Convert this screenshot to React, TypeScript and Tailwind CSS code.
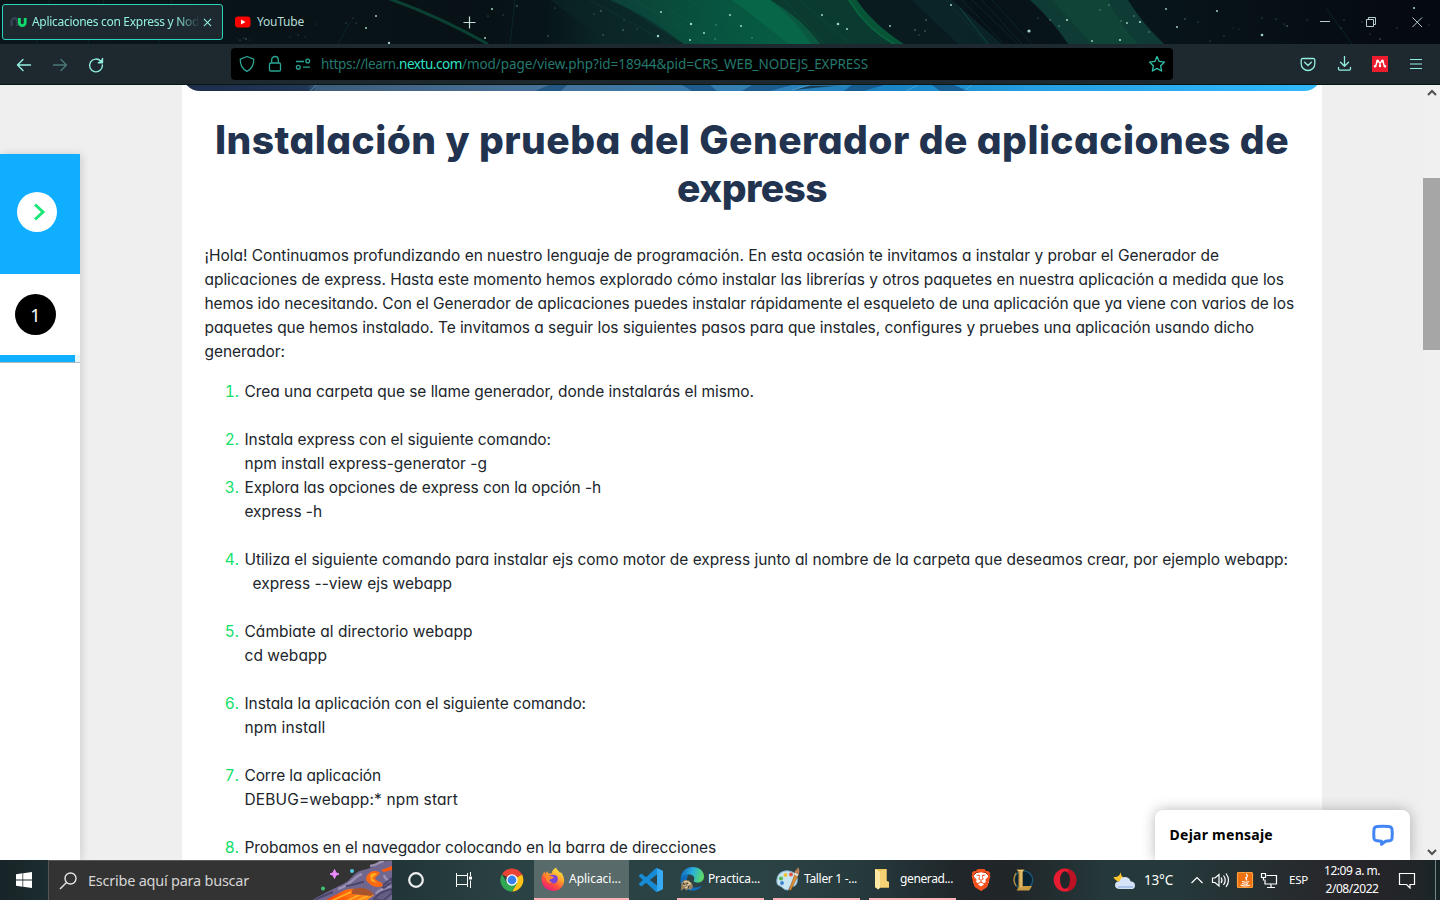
import { useLayoutEffect, useRef, useState, type ReactNode } from "react";
import { SiBrave } from "react-icons/si";

/** One line of text whose tracking is adjusted so that it spans `w` pixels. */
function Fit({ w, children, className = "" }: { w: number; children: string; className?: string }) {
  const ref = useRef<HTMLSpanElement>(null);
  const [tracking, setTracking] = useState(0);
  useLayoutEffect(() => {
    const el = ref.current;
    if (!el) return;
    const natural = el.getBoundingClientRect().width - tracking * children.length;
    setTracking((w - natural) / Math.max(1, children.length));
  }, [w, children]);
  return (
    <span ref={ref} className={`inline-block whitespace-pre ${className}`} style={{ letterSpacing: tracking }}>
      {children}
    </span>
  );
}

const stars = [
  [244, 38, 0.5], [240, 40, 0.6], [246, 39, 0.7], [237, 38, 0.4], [250, 40, 0.4], [298, 35, 0.5], [290, 37, 0.4], [305, 37, 0.4],
  [316, 24, 0.4], [346, 23, 0.6], [353, 18, 0.5], [356, 23, 0.5], [366, 28, 1], [376, 16, 1], [389, 43, 1.2],
  [492, 9, 1], [488, 16, 0.6], [517, 6, 0.8], [503, 15, 0.5], [485, 38, 1], [548, 36, 0.7], [555, 8, 0.5], [601, 11, 0.8], [594, 14, 0.6],
  [623, 30, 0.8], [603, 35, 0.7], [624, 20, 0.5], [637, 29, 0.5], [661, 12, 1], [658, 36, 1.2], [691, 24, 1.2], [704, 33, 1], [690, 40, 1],
  [730, 15, 1], [716, 25, 0.7], [741, 26, 1], [752, 38, 0.7], [715, 39, 0.7], [822, 15, 1], [838, 24, 1.3], [847, 29, 1], [890, 26, 0.9],
  [926, 20, 0.8], [915, 30, 0.8], [925, 31, 0.7], [919, 35, 0.6], [951, 5, 1], [1029, 31, 1.6], [1038, 18, 0.6], [1050, 20, 0.8],
  [1067, 20, 1.1], [1059, 26, 0.8], [1109, 5, 0.8], [1100, 10, 0.7], [1134, 16, 0.8], [1121, 21, 0.7], [1127, 23, 0.9], [1140, 22, 1.1],
  [1149, 32, 0.8], [1120, 40, 1.1], [1092, 41, 0.9], [1166, 9, 0.9], [1177, 27, 1], [1185, 19, 0.7], [1217, 11, 1], [1198, 22, 0.6],
  [1224, 36, 0.6], [1210, 41, 0.5], [1262, 35, 1.3], [1262, 18, 0.5], [1276, 19, 0.6], [1287, 26, 0.8], [1284, 24, 0.5], [1307, 20, 0.5],
  [1233, 28, 0.4], [1239, 29, 0.4], [1414, 8, 1.1], [1362, 22, 0.6], [1344, 20, 0.6], [1341, 28, 0.6], [1380, 39, 0.7], [1370, 34, 0.5],
  [1397, 28, 0.6], [1429, 25, 0.5],
];

function Aurora() {
  return (
    <svg className="absolute inset-0" width="1440" height="44" viewBox="0 0 1440 44" aria-hidden="true">
      <defs>
        <linearGradient id="sky" x1="0" x2="1">
          <stop offset="0" stopColor="#0a1519" />
          <stop offset=".33" stopColor="#071116" />
          <stop offset=".38" stopColor="#071519" />
          <stop offset=".42" stopColor="#0a2727" />
          <stop offset=".5" stopColor="#0c4437" />
          <stop offset=".56" stopColor="#0b3b2e" />
          <stop offset=".62" stopColor="#0a2024" />
          <stop offset=".68" stopColor="#071217" />
          <stop offset=".78" stopColor="#08161b" />
          <stop offset="1" stopColor="#050910" />
        </linearGradient>
        <linearGradient id="ray" x1="0" x2="1">
          <stop offset="0" stopColor="#0c4037" />
          <stop offset=".5" stopColor="#075440" />
          <stop offset="1" stopColor="#056143" />
        </linearGradient>
      </defs>
      <rect width="1440" height="44" fill="url(#sky)" />
      <path d="M550 0h62l72 44h-74z" fill="#0b2527" opacity=".7" />
      <path d="M610 0h160q30 17 50 44H684Q650 17 610 0z" fill="url(#ray)" />
      <path d="M770 0h80q16 28 46 44h-76q-20-27-50-44z" fill="#0b3b30" />
      <path d="M732 0h38q30 17 50 44h-32q-30-25-56-44z" fill="#086648" />
      <path d="M770 0q30 17 50 44h-9q-18-27-41-44z" fill="#0b5840" />
      <path d="M848 0q16 28 44 44h12Q872 23 857 0z" fill="#075536" />
      <path d="M849 0q17 28 45 44" stroke="#0b6f47" strokeWidth="1" fill="none" />
      <path d="M857 0h55l46 44h-54Q872 23 857 0z" fill="#0a1b20" />
      <path d="M912 0h40l50 44h-44z" fill="#0b282a" opacity=".8" />
      <path d="M1030 0h98q14 23 36 44h-96q-14-22-38-44z" fill="#0e3c34" />
      <path d="M1052 0h56q12 25 30 44h-46q-22-24-40-44z" fill="#11493a" opacity=".6" />
      <path d="M390-1q48 17 98 45" stroke="#0b3f33" strokeWidth="3" fill="none" />
      <path d="M960 8l28 36" stroke="#14594a" opacity=".7" />
      <path d="M962 0l42 44M972 0l46 44M982 0l40 44M992 0l40 44M946 0l40 44" stroke="#16463c" opacity=".35" />
      <path d="M590 0l80 44M635 0l72 44M655 0l70 44M688 0l65 44M705 0l62 44M718 0l60 44M745 0l50 44M784 0l40 44M800 0l50 44" stroke="#147154" opacity=".18" />
      <path d="M172 0l-14 44M350 22l-12 22M50 0L36 44M104 0L88 44M1326 8l26 36M515 0l-5 44" stroke="#12463c" opacity=".4" />
      {stars.map(([x, y, r], i) => (
        <circle key={i} cx={x} cy={y} r={r} fill="#a8ded0" opacity={r > 0.8 ? 0.95 : 0.55} />
      ))}
    </svg>
  );
}

function TabStrip() {
  return (
    <div className="relative h-11 shrink-0 overflow-hidden">
      <Aurora />
      <div className="relative flex h-full items-center font-['Noto_Sans',sans-serif] text-[12px] text-[#b5ddd6]">
        <div className="ml-0.5 flex h-9 w-[221px] items-center rounded-[3px] border border-[#2dd4bd] bg-[#1d282f] pl-[7px] text-[#93efdf]">
          <svg width="17" height="14" viewBox="0 0 17 14" fill="none" strokeWidth="2.8">
            <path d="M1.600 11V6.300a3 3 0 0 1 6 0V11" stroke="#34404f" />
            <path d="M9.400 3v4.700a2.900 2.900 0 0 0 5.800 0V3" stroke="#10dc6c" />
          </svg>
          <div className="ml-[5px] flex w-[168px] mask-r-from-86%">
            <Fit w={167}>Aplicaciones con Express y Nod</Fit>
          </div>
          <svg className="ml-[3px]" width="9" height="9" viewBox="0 0 10 10" stroke="currentColor" strokeWidth="1.200">
            <path d="M1 1l8 8M9 1l-8 8" />
          </svg>
        </div>
        <svg className="ml-3" width="16" height="12" viewBox="0 0 16 12">
          <rect y=".5" width="15.500" height="11" rx="3" fill="#f00" />
          <path d="M6 3.500v5l4.500-2.500z" fill="#fff" />
        </svg>
        <Fit w={47} className="ml-1.5">YouTube</Fit>
        <svg className="ml-[159px]" width="13" height="13" viewBox="0 0 13 13" stroke="#c3ddda" strokeWidth="1.200">
          <path d="M6.500 .5v12M.5 6.500h12" />
        </svg>
        <svg className="ml-auto mr-4" width="106" height="14" viewBox="0 0 106 14" fill="none" stroke="#b8cecd">
          <path d="M2 6.500h10M48.500 4.500h7v7h-7zM50.500 4.500v-2h7v7h-2M94.500 2.500l9.500 9.500M104 2.500L94.500 12" />
        </svg>
      </div>
    </div>
  );
}

function NavBar() {
  return (
    <div className="flex h-[41px] shrink-0 items-start border-b border-[#071713] bg-[#1d282f] text-[#93efdf]">
      <svg className="ml-4 mt-3" width="90" height="18" viewBox="0 0 90 18" fill="none" stroke="currentColor" strokeWidth="1.400" strokeLinecap="round" strokeLinejoin="round">
        <path d="M14.500 9h-13M7 3.500L1.500 9 7 14.500" />
        <path d="M37.500 9h13M45 3.500L50.500 9 45 14.500" opacity=".4" />
        <path d="M84.800 5.200A6.400 6.400 0 1 0 86.400 9M86.500 2.500v4.300h-4.200" />
        <path d="M86.500 2.500v4.300h-4.200z" fill="currentColor" stroke="none" />
      </svg>
      <div className="ml-[125px] mt-1 flex h-8 w-[942px] items-center rounded bg-black text-[#2aa594]">
        <svg className="ml-2" width="74" height="18" viewBox="0 0 74 18" fill="none" stroke="currentColor" strokeWidth="1.300" strokeLinejoin="round">
          <path d="M8 1.500l6.700 2.700c.3 6-2.200 9.700-6.700 12.200C3.500 13.900 1 10.200 1.300 4.200z" />
          <rect x="30.500" y="8" width="11" height="8" rx="1.300" />
          <path d="M32.700 8V4.800a3.300 3.300 0 0 1 6.600 0V8M57 6.500h8M64 12.200h7" />
          <circle cx="68.700" cy="6" r="1.900" />
          <circle cx="59.300" cy="12.200" r="1.900" />
        </svg>
        <div className="ml-2 flex font-['Noto_Sans',sans-serif] text-[13.500px] text-[#24786d]">
          <Fit w={78}>https://learn.</Fit>
          <Fit w={63} className="text-[#2ee0c4]">nextu.com</Fit>
          <Fit w={406}>/mod/page/view.php?id=18944&amp;pid=CRS_WEB_NODEJS_EXPRESS</Fit>
        </div>
        <svg className="ml-auto mr-[7px]" width="18" height="18" viewBox="0 0 18 18" fill="none" stroke="#2fc0aa" strokeWidth="1.300" strokeLinejoin="round">
          <path d="M9 1.500l2.200 4.900 5.300.7-3.900 3.600 1 5.300L9 13.400 4.400 16l1-5.300L1.500 7.100l5.300-.7z" />
        </svg>
      </div>
      <div className="ml-[126px] mt-3 flex h-4 w-[125px] items-center justify-between">
        <svg width="18" height="16" viewBox="0 0 18 16" fill="none" stroke="currentColor" strokeWidth="1.300" strokeLinecap="round" strokeLinejoin="round">
          <path d="M3.700 2.500h10.600a1.500 1.500 0 0 1 1.500 1.500v3.700a6.800 6.800 0 0 1-13.600 0V4a1.500 1.500 0 0 1 1.500-1.500zM5.600 6.300L9 9.500l3.400-3.200" />
        </svg>
        <svg width="16" height="16" viewBox="0 0 16 16" fill="none" stroke="currentColor" strokeWidth="1.300" strokeLinecap="round" strokeLinejoin="round">
          <path d="M7.500.5v9.500M3.500 6.200l4 4 4-4M1.500 11.500v1.200a1.500 1.500 0 0 0 1.500 1.500h9a1.500 1.500 0 0 0 1.500-1.500v-1.200" />
        </svg>
        <svg width="16" height="16" viewBox="0 0 16 16">
          <path d="M0 0h16v16H0z" fill="#eb1c2d" />
          <path d="M5.200 5.200C4.300 7 4.600 8.800 3.200 10.300M10.800 5.200c.9 1.800.6 3.600 2 5.100M5.700 5l2.300 1.800L10.300 5M8 6.800v3.200" stroke="#fff" strokeWidth="1.500" fill="none" strokeLinecap="round" />
          <circle cx="5.600" cy="5.100" r="1.500" fill="#fff" />
          <circle cx="10.400" cy="5.100" r="1.500" fill="#fff" />
          <circle cx="3.100" cy="10.300" r="1.200" fill="#fff" />
          <circle cx="8" cy="10" r="1.200" fill="#fff" />
          <circle cx="12.900" cy="10.300" r="1.200" fill="#fff" />
        </svg>
        <svg width="16" height="16" viewBox="0 0 16 16" stroke="currentColor">
          <path d="M2 3.500h12M2 8h12M2 12.500h12" strokeWidth="1.200" />
        </svg>
      </div>
    </div>
  );
}

function Lesson() {
  return (
    <aside className="mt-[69px] flex w-20 shrink-0 flex-col bg-white shadow-[2px_0_8px_rgba(0,0,0,0.13)]">
      <div className="flex h-[120px] shrink-0 items-start bg-[#0faeff] pl-[17px] pt-[38px]">
        <div className="flex size-10 items-center justify-center rounded-full bg-white">
          <svg className="ml-[3px]" width="14" height="20" viewBox="0 0 14 20" fill="none" stroke="#1de578" strokeWidth="3">
            <path d="M3 2.500L11 10 3 17.500" />
          </svg>
        </div>
      </div>
      <div className="h-[89px] shrink-0 border-b border-[#b3bac0]">
        <div className="ml-[15px] mt-5 flex size-[41px] items-center justify-center rounded-full bg-black pt-0.5 font-['Noto_Sans',sans-serif] text-[18px] text-white">1</div>
        <div className="mt-5 h-[7px] bg-[#e6f6ff]">
          <div className="h-full w-[75px] bg-[#0faeff]" />
        </div>
      </div>
    </aside>
  );
}

type Line = [string, number];

const intro: Line[] = [
  ["¡Hola! Continuamos profundizando en nuestro lenguaje de programación. En esta ocasión te invitamos a instalar y probar el Generador de", 1014.5],
  ["aplicaciones de express. Hasta este momento hemos explorado cómo instalar las librerías y otros paquetes en nuestra aplicación a medida que los", 1079.5],
  ["hemos ido necesitando. Con el Generador de aplicaciones puedes instalar rápidamente el esqueleto de una aplicación que ya viene con varios de los", 1089.5],
  ["paquetes que hemos instalado. Te invitamos a seguir los siguientes pasos para que instales, configures y pruebes una aplicación usando dicho", 1049.5],
  ["generador:", 80.5],
];

const steps: { lines: Line[]; tight?: boolean; indent?: boolean }[] = [
  { lines: [["Crea una carpeta que se llame generador, donde instalarás el mismo.", 509.5]] },
  { lines: [["Instala express con el siguiente comando:", 306.5], ["npm install express-generator -g", 242.5]], tight: true },
  { lines: [["Explora las opciones de express con la opción -h", 356.5], ["express -h", 77.5]] },
  {
    lines: [
      ["Utiliza el siguiente comando para instalar ejs como motor de express junto al nombre de la carpeta que deseamos crear, por ejemplo webapp:", 1043.5],
      ["express --view ejs webapp", 199.5],
    ],
    indent: true,
  },
  { lines: [["Cámbiate al directorio webapp", 228], ["cd webapp", 82.5]] },
  { lines: [["Instala la aplicación con el siguiente comando:", 341.5], ["npm install", 81]] },
  { lines: [["Corre la aplicación", 136.5], ["DEBUG=webapp:* npm start", 213.5]] },
  { lines: [["Probamos en el navegador colocando en la barra de direcciones", 471.5]] },
];

function Banner() {
  return (
    <div className="-mt-6 flex h-[30px] shrink-0 items-end overflow-hidden rounded-b-[18px]">
      <svg width="1140" height="6" viewBox="0 0 1140 6">
        <defs>
          <linearGradient id="banner" x1="0" x2="1">
            <stop offset="0" stopColor="#1d2c4b" />
            <stop offset=".11" stopColor="#223756" />
            <stop offset=".118" stopColor="#3f5d7c" />
            <stop offset=".3" stopColor="#477096" />
            <stop offset=".5" stopColor="#3380b5" />
            <stop offset=".62" stopColor="#1a84c5" />
            <stop offset=".75" stopColor="#269fe0" />
            <stop offset="1" stopColor="#31b9ff" />
          </linearGradient>
        </defs>
        <path d="M0 0h1140v6H0z" fill="url(#banner)" />
        <path d="M353 6l14-6h18l-6 6zM500 0h28l7 6h-25zM570 0h40l-22 6h-28zM670 0h32l-20 6h-20zM750 0h22l14 6h-28z" fill="#164d7c" opacity=".7" />
        <path d="M128 6l6-6M610 5l18-5h36M724 6l12-6M790 0l-8 6" stroke="#69b9e5" opacity=".5" />
      </svg>
    </div>
  );
}

function Article() {
  return (
    <main className="ml-[102px] flex h-full w-[1140px] shrink-0 flex-col overflow-hidden bg-white font-['Inter',sans-serif] text-[15.500px] leading-6 text-[#20252b] [font-feature-settings:'cv11']">
      <Banner />
      <h1 className="mt-[25px] flex h-24 flex-col items-center text-[39px] font-extrabold leading-[48px] text-[#22334f]">
        <Fit w={1074}>Instalación y prueba del Generador de aplicaciones de</Fit>
        <Fit w={150}>express</Fit>
      </h1>
      <p className="ml-[22.500px] mt-8 flex flex-col items-start">
        {intro.map(([text, w]) => (
          <Fit key={text} w={w}>{text}</Fit>
        ))}
      </p>
      <ol className="mt-4 flex flex-col">
        {steps.map((step, i) => (
          <li key={i} className={`flex shrink-0 ${step.tight ? "" : "mb-6"}`}>
            <span className="w-[57px] shrink-0 text-right text-[#10df6a] [font-feature-settings:'tnum']">{i + 1}.</span>
            <div className="ml-[5.500px] flex flex-col items-start">
              {step.lines.map(([text, w], n) => (
                <Fit key={text} w={w} className={step.indent && n === 1 ? "ml-2" : ""}>{text}</Fit>
              ))}
            </div>
          </li>
        ))}
      </ol>
    </main>
  );
}

function ScrollBar() {
  return (
    <div className="ml-auto flex w-[17px] shrink-0 flex-col items-center bg-[#f0f0f0] py-1">
      <svg width="10" height="8" viewBox="0 0 10 8" fill="none" stroke="#505050" strokeWidth="2">
        <path d="M1 6l4-4 4 4" />
      </svg>
      <div className="mt-[81px] h-[172px] w-full bg-[#a6a6a6]" />
      <svg className="mt-auto" width="10" height="8" viewBox="0 0 10 8" fill="none" stroke="#505050" strokeWidth="2">
        <path d="M1 2l4 4 4-4" />
      </svg>
    </div>
  );
}

function ChatBox() {
  return (
    <div className="absolute bottom-0 left-[1155px] flex h-[50px] w-[255px] items-center rounded-t-lg bg-white pl-[14.500px] pr-[15px] shadow-[0_0_14px_rgba(0,0,0,0.28)]">
      <Fit w={103.5} className="-mt-0.5 font-['Noto_Sans',sans-serif] text-[14px] font-bold text-black">Dejar mensaje</Fit>
      <svg className="ml-auto" width="24" height="24" viewBox="0 0 24 24" fill="none">
        <path d="M6 3.500Q12 2.900 18 3.500 20.600 3.800 21 6.200q.5 4.600 0 9.300-.4 2-2.500 2.300l-4 .5-4 3v-3l-4.500-.5Q3.400 17.500 3 15.500q-.5-4.700 0-9.300.4-2.400 3-2.700z" stroke="#4285f4" strokeWidth="3" strokeLinejoin="round" />
      </svg>
    </div>
  );
}

function Cell({ children, className = "" }: { children?: ReactNode; className?: string }) {
  return <div className={`flex h-full shrink-0 items-center ${className}`}>{children}</div>;
}

function ChromeIcon() {
  return (
    <svg width="24" height="24" viewBox="0 0 24 24">
      <path d="M12 12L2 6.200A11.500 11.500 0 0 1 22 6.500z" fill="#ea4335" />
      <path d="M12 12l10-5.500A11.500 11.500 0 0 1 12 23.500l5-8.600z" fill="#fbc116" />
      <path d="M12 12l5 3-5 8.500A11.500 11.500 0 0 1 2 6.200l5 8.700z" fill="#31a853" />
      <path d="M12 6.500h10.200l.3.600" stroke="#ea4335" strokeWidth="1" />
      <circle cx="12" cy="12" r="5.700" fill="#fff" />
      <circle cx="12" cy="12" r="4.400" fill="#3880ee" />
    </svg>
  );
}

function FirefoxIcon() {
  return (
    <svg width="24" height="24" viewBox="0 0 24 24">
      <defs>
        <linearGradient id="fox" x1=".85" y1="0" x2=".25" y2="1">
          <stop offset="0" stopColor="#fff14a" />
          <stop offset=".4" stopColor="#ffa52b" />
          <stop offset=".7" stopColor="#ff4b3f" />
          <stop offset="1" stopColor="#e31587" />
        </linearGradient>
      </defs>
      <path d="M15 .5c1 2.800 2.800 3.700 4.500 5.500l.4-1c3.500 4.700 4.200 9.500 2 13.500A11.500 11.500 0 0 1 .7 13.500C.2 9 2 6.500 3.500 4.500l.6 2.200 2.200-2.500.9 2 3.300.6C10.800 3.800 13 2 15 .5z" fill="url(#fox)" />
      <path d="M8 8.500l4.500-.8c3.500.3 4.800 2.600 4.300 5.100-.5 2.600-2.500 4-4.900 3.700-2.800-.3-4.400-2.200-4.400-4.600l3-.2 2.600-1.300c-1.300-1.300-3.400-.7-5.100-1.900z" fill="#7a44d6" />
      <path d="M3.500 7.500c1.500 0 2.500 1.200 5 1.400l3.700 1.700c-1 1.300-2.600 1.200-3.400 2.200-1 1.300.2 2.600 2.800 2.200-3.600 2.400-6.500-.5-6.500-3.500z" fill="#ff8c28" />
    </svg>
  );
}

function VsCodeIcon() {
  return (
    <svg width="24" height="24" viewBox="0 0 24 24">
      <path fill="#168bd6" d="M23.150 2.587L18.210.21a1.494 1.494 0 0 0-1.705.29l-9.460 8.630-4.120-3.128a.999.999 0 0 0-1.276.057L.327 7.261A1 1 0 0 0 .326 8.740L3.899 12 .326 15.260a1 1 0 0 0 .001 1.479L1.650 17.940a.999.999 0 0 0 1.276.057l4.120-3.128 9.460 8.630a1.492 1.492 0 0 0 1.704.29l4.942-2.377A1.500 1.500 0 0 0 24 20.060V3.939a1.500 1.500 0 0 0-.85-1.352zm-5.146 14.861L10.826 12l7.178-5.448v10.896z" />
      <path fill="#35aaf3" d="M18 .2l5.200 2.400q.8.500.8 1.400v16q0 .9-.8 1.400L18 23.800z" />
    </svg>
  );
}

function EdgeIcon() {
  return (
    <svg width="26" height="26" viewBox="0 0 26 26">
      <defs>
        <linearGradient id="wave" x1="0" y1=".3" x2="1" y2=".5">
          <stop offset="0" stopColor="#1268c0" />
          <stop offset=".5" stopColor="#29b0dd" />
          <stop offset="1" stopColor="#5ddc62" />
        </linearGradient>
      </defs>
      <path d="M1.500 13C2 5 7.500 1 13.500 1 21 1 25 6 25 10.500c0 4-3 6-6.500 6-3 0-4.500-1-3.500-2.500 1-2.500-.5-5-4-5.500-4 0-8 2-9.500 4.500z" fill="url(#wave)" />
      <path d="M1.500 13.500C3 9 7 8 10 8.500c-3 3-3 9 1 12 3.500 2 8.500 1 12-.7C19 26 10 26 5 22c-3-3-3.800-5-3.500-8.500z" fill="#116dbc" />
      <path d="M2.500 16.500l3-2.500 4 .2 3 2.500 1.500 3.500-2 3.500-3-1-1.500 2-2-2.500-3.500 2.500z" fill="#9c835f" />
      <path d="M5 16.500l2-1 3 1 1.500 2M4.500 19h2M8 18.500h2M6 22l3-1.500" stroke="#e6d7ae" strokeWidth="1.300" fill="none" />
      <path d="M4 17.500l2 1M8 17l1 1M9 21.500l1-1" stroke="#3e392d" strokeWidth="1.300" />
    </svg>
  );
}

function PaintIcon() {
  return (
    <svg width="26" height="26" viewBox="0 0 26 26">
      <path d="M2 13C3 6 10 3.500 16 5.500c7 2 7.500 9 5 13-2 3-4 1-6 2-1.500 1 .5 3.500-3 3.500-3.500.2-5-4-8-4.500C2 19 1.500 16 2 13z" fill="#c9e5f3" stroke="#83b3cf" />
      <circle cx="6" cy="12.500" r="2.100" fill="#55b852" />
      <circle cx="10.500" cy="9" r="2" fill="#ecc43c" />
      <circle cx="16" cy="8.500" r="1.900" fill="#de5541" />
      <circle cx="7" cy="17" r="1.900" fill="#3d81d4" />
      <path d="M20 8l3 1.500L16 24h-2z" fill="#db8d38" stroke="#985720" strokeWidth=".6" />
      <path d="M19.500 8c-.5-4 2.500-3.500 3.500-7 2 3 2 6-.5 9z" fill="#b98059" />
      <path d="M19.500 7.500l3.500 2" stroke="#e4e8ec" strokeWidth="2" />
    </svg>
  );
}

function FolderIcon() {
  return (
    <svg width="16" height="22" viewBox="0 0 16 22">
      <path d="M1 1h11.500v12l2.500 1v5.500H1z" fill="#ecc35b" />
      <path d="M1 1l5 2.500V20l-2 1.500L1 19z" fill="#ffe9a3" />
      <path d="M6 3.500L12.500 1v12l2.500 1v5.500H6z" fill="#f5d276" />
    </svg>
  );
}

function LeagueIcon() {
  return (
    <svg width="22" height="24" viewBox="0 0 22 24">
      <circle cx="11.500" cy="12" r="9.200" fill="#092333" stroke="#1d5b78" strokeWidth="1.300" />
      <path d="M4.500 1.500h8l-1.700 2.600V18H20l-2.800 4.500H4.500l2-3V4.300z" fill="#c99b43" />
      <path d="M6.500 2.500h4L9 4v15.500" stroke="#f1d18a" fill="none" />
      <path d="M4 5q-4 6.500 0 13" stroke="#b48838" strokeWidth="1.400" fill="none" />
    </svg>
  );
}

function Hero() {
  return (
    <svg className="ml-auto" width="80" height="40" viewBox="0 0 80 40">
      <defs>
        <linearGradient id="lava" x1="0" x2="1">
          <stop offset="0" stopColor="#ff3d00" />
          <stop offset="1" stopColor="#ff9a20" />
        </linearGradient>
      </defs>
      <path d="M0 40c3-4 9-5 13-8l18-9c9-4 10-12 20-14 12-2 12-8 24-9h5v40z" fill="#71678e" />
      <path d="M26 28c14-4 16-13 24-15M58 5c8-1 8-4 14-5M64 33c3-5 9-5 15-8M72 14c1 4 4 6 8 7" stroke="#9a90b2" strokeWidth="2.500" fill="none" />
      <path d="M3 39c6-4 12-5 18-8M34 25c10-1 14-4 18-4M62 38c4-6 10-8 18-10v4l-9 8zM70 25l10-8v4l-8 6z" stroke="#4b466e" strokeWidth="2" fill="#4b466e" fillOpacity=".3" />
      <path d="M12 40l21-11c10-3 19 0 29 5l-8 6z" fill="url(#lava)" />
      <path d="M19 40l20-9M35 40l14-7M45 40l12-6" stroke="#ffae21" strokeWidth="1.800" />
      <path d="M40 29c8-4 15-3 22 4l-3 2-19-2z" fill="#a9542f" />
      <path d="M54 17c2-7 10-9 14-5l-5 5c1 4 8 3 8 8-5 2-11 1-14-3-2-1-3-3-3-5z" fill="#fa6813" />
      <path d="M58 14c2-2 5-3 7-1l-5 4 5 5-6-2z" fill="#ffad1e" />
      <path d="M69 9l11-4v4l-8 2z" fill="#ff5a0c" />
      <path d="M22.500 8.500l1.300 3.200L27 13l-3.200 1.300-1.300 3.200-1.300-3.200L18 13l3.200-1.300z" fill="#ed8cff" stroke="#ed8cff" />
      <circle cx="40" cy="10" r="2" fill="#50cae3" />
      <circle cx="11" cy="27.500" r="2" fill="#40c775" />
    </svg>
  );
}

function Taskbar() {
  return (
    <footer className="flex h-10 shrink-0 items-center bg-[linear-gradient(90deg,#182427_0px,#1c2d2f_48px,#213538_392px,#2b4244_520px,#2c4345_760px,#263a3d_860px,#20262a_960px,#202528_1010px,#25393b_1110px,#25393b_1170px,#272529_1350px,#202528_1420px,#162427_1440px)] font-['Noto_Sans',sans-serif] text-[12px] text-white">
      <Cell className="w-12 justify-center">
        <svg width="16" height="16" viewBox="0 0 16 16" fill="#fff">
          <path d="M0 2.200L6.500 1.300v6.300H0zM7.200 1.200L16 0v7.600H7.200zM0 8.400h6.500v6.300L0 13.800zM7.200 8.400H16V16l-8.800-1.200z" />
        </svg>
      </Cell>
      <Cell className="w-[344px] border border-b-0 border-r-0 border-[#575757] bg-[#333333]">
        <svg className="ml-2.5" width="20" height="20" viewBox="0 0 20 20" fill="none" stroke="#e4e4e4" strokeWidth="1.400">
          <circle cx="11.500" cy="7.500" r="5.500" />
          <path d="M7.500 11.500L1 18" />
        </svg>
        <Fit w={161} className="ml-[9px] text-[14.500px] text-[#d5d5d5]">Escribe aquí para buscar</Fit>
        <Hero />
      </Cell>
      <Cell className="w-12 justify-center">
        <svg width="18" height="18" viewBox="0 0 18 18" fill="none" stroke="#eee" strokeWidth="2.200">
          <circle cx="9" cy="9" r="6.800" />
        </svg>
      </Cell>
      <Cell className="w-12 justify-center">
        <svg width="18" height="16" viewBox="0 0 18 16" fill="none" stroke="#fff">
          <path d="M1.500 1v2.500h11V1M1.500 15v-2.500h11V15M1.500 3.500v9M12.500 3.500v9M15.500 0v4M15.500 8.500V16" />
          <path d="M14 4.500h3v3h-3z" fill="#fff" stroke="none" />
        </svg>
      </Cell>
      <Cell className="w-[46px] pl-3"><ChromeIcon /></Cell>
      <Cell className="w-[95px] border-b-2 border-[#ffb1b5] bg-[#586b6a] pl-[7px]">
        <FirefoxIcon /><Fit w={52} className="ml-1">Aplicaci...</Fit>
      </Cell>
      <Cell className="w-12 pl-2.5"><VsCodeIcon /></Cell>
      <Cell className="w-[87px] border-b-2 border-[#ffb1b5] pl-0.5">
        <EdgeIcon /><Fit w={52} className="ml-[3px]">Practica...</Fit>
      </Cell>
      <Cell className="ml-[9px] w-[87px] border-b-2 border-[#ffb1b5] pl-0.5">
        <PaintIcon /><Fit w={53} className="ml-[3px]">Taller 1 -...</Fit>
      </Cell>
      <Cell className="ml-[9px] w-[87px] border-b-2 border-[#ffb1b5] pl-[5px]">
        <FolderIcon /><Fit w={53} className="ml-2.5">generad...</Fit>
      </Cell>
      <Cell className="w-[157px] pl-3.5">
        <span className="flex h-6 w-[22px] items-center justify-center bg-[radial-gradient(circle,white_8px,transparent_8px)]">
          <SiBrave size={24} color="#f4511e" />
        </span>
        <span className="ml-5"><LeagueIcon /></span>
        <svg className="ml-[19px]" width="24" height="24" viewBox="0 0 24 24">
          <ellipse cx="12" cy="12" rx="11.300" ry="11.500" fill="#e91b31" />
          <path d="M15 1q8 2 8.300 11T15 23.300z" fill="#bd1224" />
          <ellipse cx="12" cy="12" rx="5" ry="8.700" fill="#21272b" />
        </svg>
      </Cell>
      <Cell className="flex-1">
        <svg width="24" height="22" viewBox="0 0 24 22">
          <path d="M8.500 1Q6 6 12 10q-3 4-8 2-3-2-3.500-4Q7 9 8.500 1z" fill="#ffc52d" />
          <path d="M7 20Q2 20 2 16q.2-3.500 4.500-3.800Q8 7.500 12.500 8q4 .5 5 4.200 4.500.3 4.500 4.200 0 3.600-4 3.600z" fill="#d5e3f8" />
          <path d="M5 18h15" stroke="#abc2ea" strokeWidth="2" />
        </svg>
        <Fit w={29} className="ml-[7px] text-[13.500px]">13°C</Fit>
        <svg className="ml-[17px]" width="90" height="18" viewBox="0 0 90 18" fill="none" stroke="#fff" strokeWidth="1.200">
          <path d="M1.500 12L7 6.500l5.500 5.500M22.500 7v4.500H25l4 3.500V3.500L25 7zM31 6.500q2 2.700 0 5.500M33.500 4.500q3.500 4.700 0 9.500M36 2.500q5 6.700 0 13.500" />
          <rect x="47.500" y="1.500" width="15" height="15" rx="1" fill="#ed7110" stroke="#ff9e3c" />
          <path d="M56 3q3 2-.3 4 1.500 1 .5 2.500M52 10.500q4 1.500 7 0M52 12.500q4 1.500 6 0M50.500 14q5 2 9.500 0" />
          <path d="M76.500 4.500h10v8.500H75V8.500M81 13v3M77 16.500h8M71.500 2.500h4v4h-4zM73.500 6.500v3" />
        </svg>
        <Fit w={19} className="ml-[9px] text-[11.500px]">ESP</Fit>
        <div className="ml-4 flex w-14 flex-col items-center leading-[18px]">
          <Fit w={56}>12:09 a. m.</Fit>
          <Fit w={53}>2/08/2022</Fit>
        </div>
        <svg className="ml-[18px]" width="18" height="18" viewBox="0 0 18 18" fill="none" stroke="#fff" strokeWidth="1.200">
          <path d="M1.500 2.500h15v11H12V17l-3.500-3.500h-7z" />
        </svg>
        <div className="ml-auto mr-1 h-full w-px bg-[#7c8585]" />
      </Cell>
    </footer>
  );
}

export default function App() {
  return (
    <div className="flex h-[900px] w-[1440px] flex-col overflow-hidden font-['Noto_Sans',sans-serif]">
      <TabStrip />
      <NavBar />
      <div className="relative flex min-h-0 flex-1 overflow-hidden bg-[#efefef]">
        <Lesson />
        <Article />
        <ScrollBar />
        <ChatBox />
      </div>
      <Taskbar />
    </div>
  );
}
